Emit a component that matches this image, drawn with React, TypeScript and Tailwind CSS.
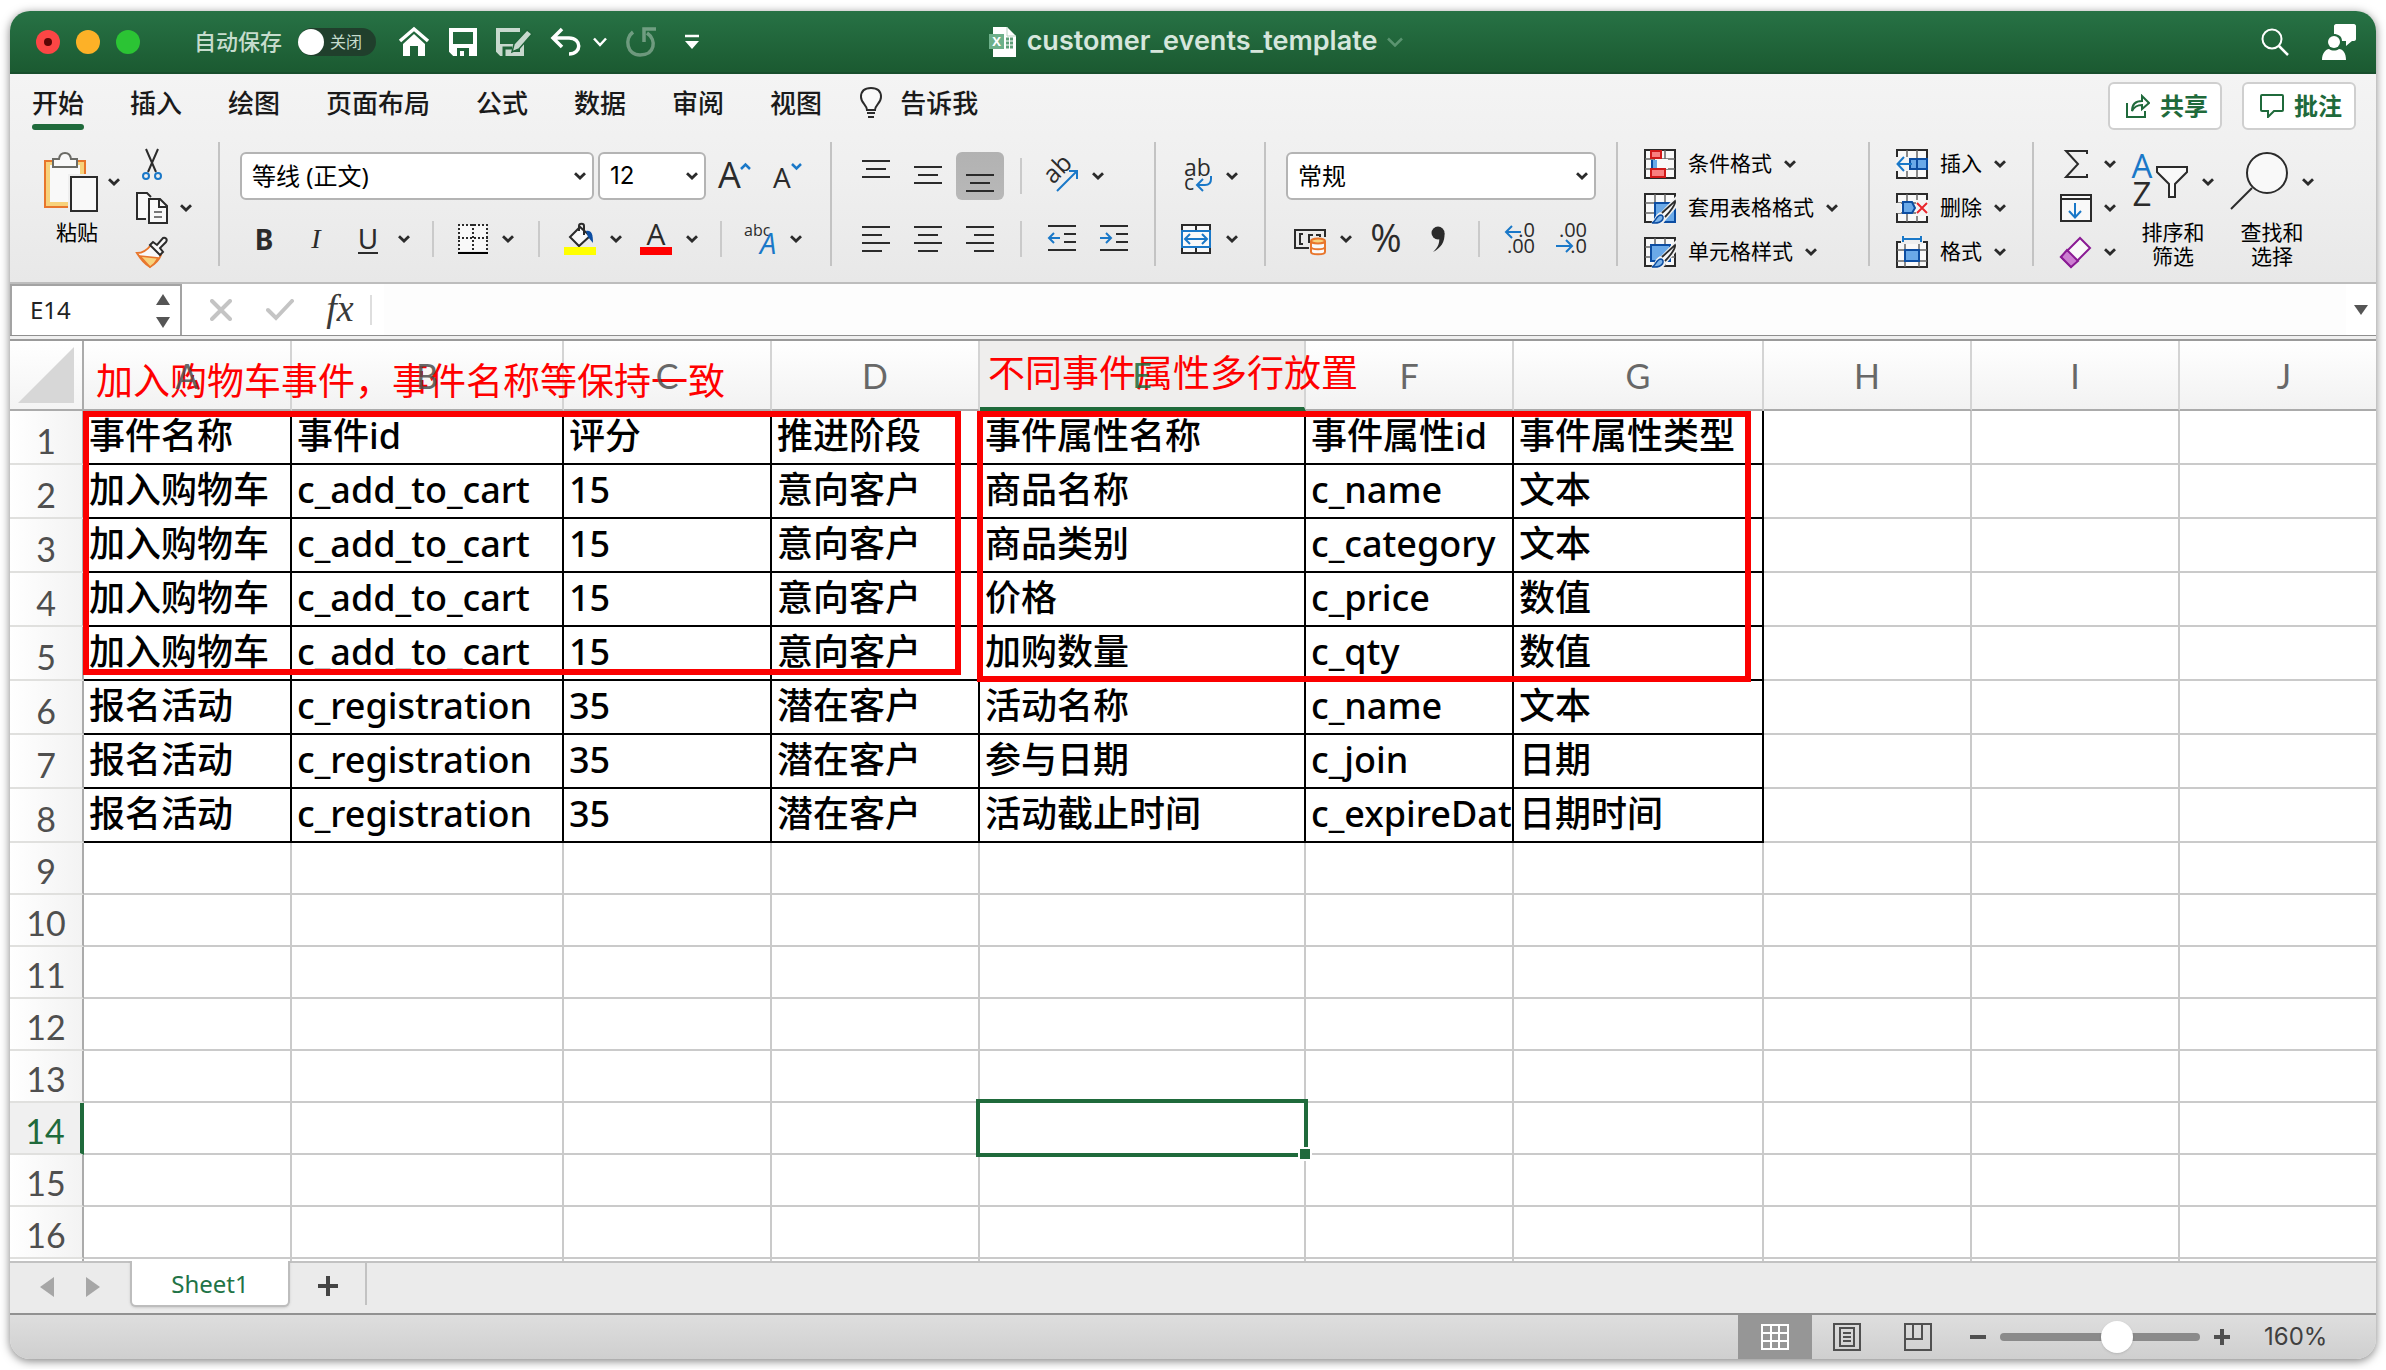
import type React from "react"

type IconProps = { children: React.ReactNode; w?: number; h?: number }

const INK = "#2b2b2b"
const BLUE = "#1a78c8"

const Icon: React.FC<IconProps> = ({ children, w = 32, h = 32 }) => (
  <svg width={w} height={h} viewBox={`0 0 ${w} ${h}`} fill="none" stroke={INK} strokeWidth="2" className="shrink-0 overflow-visible" aria-hidden="true">
    {children}
  </svg>
)

const Chevron: React.FC = () => (
  <svg width="12" height="8" viewBox="0 0 12 8" fill="none" stroke={INK} strokeWidth="2.8" className="shrink-0" aria-hidden="true">
    <path d="M1 1.2L6 6L11 1.2" />
  </svg>
)

const Divider: React.FC = () => <div className="h-[124px] w-0.5 shrink-0 bg-[#c3c3c3]" />

const glyph = { stroke: "none", fontFamily: "Open Sans, Noto Sans, sans-serif" }

/* ---------- ribbon icons ---------- */

const PasteIcon = () => (
  <Icon w={54} h={60}>
    <path d="M1 9H41V55H1Z" fill="#f7d27c" stroke="#e8762c" />
    <path d="M6 13H36V50H6Z" fill="#f9f9f9" stroke="none" />
    <path d="M9 15V7H15C16 -1 26 -1 27 7H33V15Z" fill="#f9f9f9" stroke="#6b6b66" />
    <path d="M24 22H54V60H24Z" fill="#efefef" stroke="none" />
    <path d="M27 25H53V59H27Z" fill="#f9f9f9" />
  </Icon>
)

const CutIcon = () => (
  <Icon>
    <path d="M10 1L20 24M22 1L12 24" />
    <circle cx="10" cy="28" r="3" stroke={BLUE} />
    <circle cx="22" cy="28" r="3" stroke={BLUE} />
  </Icon>
)

const CopyIcon = () => (
  <Icon>
    <path d="M10 27H1V1H11L15 5" fill="#f9f9f9" />
    <path d="M13 7H24L31 14V31H13Z" fill="#f9f9f9" />
    <path d="M23 7V15H31" />
    <path d="M18 20H26M18 25H26" stroke="#777" />
  </Icon>
)

const BrushIcon = () => (
  <Icon>
    <path d="M1 17C7 17 12 13 15 9L25 19C23 24 19 28 14 31C9 28 4 22 1 17Z" fill="#f9f9f9" stroke="#e8762c" />
    <path d="M4 20L22 22C20 26 17 29 14 31Z" fill="#f7d27c" stroke="#e8762c" strokeWidth="1.5" />
    <path d="M14 9L17 6L21 9L27 2C29 1 32 3 30 6L24 12L27 16L24 19Z" fill="#f9f9f9" />
  </Icon>
)

const BordersIcon = () => (
  <Icon>
    <path d="M3 2H31V28H3Z" fill="#f9f9f9" stroke="none" />
    <path d="M2 2H32M2 15H32" strokeDasharray="2 2" />
    <path d="M3 1V28M17 1V28M31 1V28" strokeDasharray="2 2" />
    <path d="M2 30H32" stroke="#000" />
  </Icon>
)

const FillIcon = () => (
  <Icon>
    <path d="M6 14L16 4L26 13L15 23Z" fill="#f9f9f9" />
    <path d="M15 8V3C15 0 20 0 20 3V12" />
    <path d="M22 8C27 7 29 10 29 20L24 14Z" fill="#0c4da2" stroke="none" />
    <path d="M0 24H32V32H0Z" fill="#ff0" stroke="none" />
  </Icon>
)

const FontColorIcon = () => (
  <Icon>
    <text x="16" y="22" fontSize="30" textAnchor="middle" fill={INK} style={glyph}>A</text>
    <path d="M0 24H32V32H0Z" fill="#f00" stroke="none" />
  </Icon>
)

const PhoneticIcon = () => (
  <Icon w={34}>
    <text x="1" y="13" fontSize="16" fill={INK} style={glyph}>abc</text>
    <text x="17" y="31" fontSize="29" fontStyle="italic" fill={BLUE} style={glyph}>A</text>
  </Icon>
)

const GrowIcon = () => (
  <Icon w={36}>
    <text x="2" y="28" fontSize="36" fill={INK} style={glyph}>A</text>
    <path d="M25 9L29.500 4.500L34 9" stroke={BLUE} strokeWidth="2.500" />
  </Icon>
)

const ShrinkIcon = () => (
  <Icon w={36}>
    <text x="5" y="28" fontSize="28" fill={INK} style={glyph}>A</text>
    <path d="M24 4L28.500 8.500L33 4" stroke={BLUE} strokeWidth="2.500" />
  </Icon>
)

const LinesIcon: React.FC<{ lines: number[][] }> = ({ lines }) => (
  <Icon w={28}>
    {lines.map(([x, y, w]) => (
      <path key={y} d={`M${x} ${y}H${x + w}`} />
    ))}
  </Icon>
)

const OrientIcon = () => (
  <Icon>
    <text x="7" y="25" fontSize="25" fill={INK} transform="rotate(-45 7 25)" style={glyph}>ab</text>
    <path d="M11 31L31 11M23 11H31V19" stroke={BLUE} />
  </Icon>
)

const IndentIcon: React.FC<{ out?: boolean }> = ({ out }) => (
  <Icon w={28}>
    <path d="M0 3H28M16 11H28M16 19H28M0 27H28" />
    <path d={out ? "M12 15H2M6 10L1 15L6 20" : "M0 15H10M6 10L11 15L6 20"} stroke={BLUE} />
  </Icon>
)

const WrapIcon = () => (
  <Icon>
    <text x="4" y="16" fontSize="23" fill={INK} style={glyph}>ab</text>
    <text x="4" y="30" fontSize="21" fill={INK} style={glyph}>c</text>
    <path d="M31 16V19C31 24 28 25 25 25H17M23 19L17 25L23 31" stroke={BLUE} />
  </Icon>
)

const MergeIcon = () => (
  <Icon w={30} h={30}>
    <path d="M1 1H29V29H1Z" fill="#f9f9f9" />
    <path d="M15 1V7M15 24V29" />
    <path d="M1 7H29V23H1Z" fill="#f9f9f9" stroke={BLUE} />
    <path d="M5 15H25M9 10L4 15L9 20M21 10L26 15L21 20" stroke={BLUE} />
  </Icon>
)

const CurrencyIcon = () => (
  <Icon>
    <path d="M15 25H1V7H31V14" />
    <path d="M9 11H6V21H9M15 20V12H19M26 14V12H22" />
    <path d="M17 18V29C17 32 31 32 31 29V18" fill="#f9f9f9" stroke="#e8762c" />
    <ellipse cx="24" cy="18" rx="7" ry="2.500" fill="#f7d27c" stroke="#e8762c" />
    <path d="M17 24C18 27 30 27 31 24" stroke="#e8762c" />
  </Icon>
)

const PercentIcon = () => (
  <Icon w={34}>
    <text x="17" y="29" fontSize="38" textAnchor="middle" fill={INK} style={glyph}>%</text>
  </Icon>
)

const CommaIcon = () => (
  <Icon w={16}>
    <circle cx="8" cy="10" r="6.500" fill={INK} stroke="none" />
    <path d="M14.500 10C15 19 11 25 3 29C8 24 10 20 9 14Z" fill={INK} stroke="none" />
  </Icon>
)

const DecimalIcon: React.FC<{ more?: boolean }> = ({ more }) => (
  <Icon>
    <text x="31" y="14" fontSize="20" textAnchor="end" fill={INK} style={glyph}>{more ? ".0" : ".00"}</text>
    <text x="31" y="30" fontSize="20" textAnchor="end" fill={INK} style={glyph}>{more ? ".00" : ".0"}</text>
    <path d={more ? "M17 9H2M8 3L2 9L8 15" : "M0 23H16M10 17L16 23L10 29"} stroke={BLUE} />
  </Icon>
)

const GridBase = () => (
  <>
    <path d="M1 2H31V30H1Z" fill="#f9f9f9" />
    <path d="M1 11H31M1 21H31M11 2V30M21 2V30" stroke="#666" strokeWidth="1.500" />
  </>
)

const BrushOverlay = () => (
  <>
    <path d="M8 31C13 31 12 22 18 22L31 8V14L20 27C18 31 13 33 8 31Z" fill="#f0f0f0" stroke="#f0f0f0" strokeWidth="4" />
    <path d="M18 21L31 9C32 12 26 20 21 25" fill="#f9f9f9" strokeWidth="1.800" />
    <path d="M8 31C12 30 12 23 17 23C21 24 20 32 8 31Z" fill="#7db4ea" stroke="#0c4da2" strokeWidth="1.500" />
  </>
)

const ConditionalIcon = () => (
  <Icon>
    <GridBase />
    <path d="M11 11H24V21H11Z" fill="#f9f9f9" stroke="none" />
    <path d="M7 12H13V20H7Z" fill="#6aa9e8" stroke="none" />
    <path d="M8 12V20" stroke="#0c4da2" />
    <path d="M7 3H17V10H7ZM7 21H21V29H7Z" fill="#f98080" stroke="#d11a1a" />
  </Icon>
)

const TableFormatIcon = () => (
  <Icon>
    <GridBase />
    <path d="M11 11H31V30H11Z" fill="#6aa9e8" stroke="#0c4da2" />
    <BrushOverlay />
  </Icon>
)

const CellStyleIcon = () => (
  <Icon>
    <GridBase />
    <path d="M7 9H26V25H7Z" fill="#6aa9e8" stroke="#0c4da2" />
    <BrushOverlay />
  </Icon>
)

const InsertIcon = () => (
  <Icon>
    <GridBase />
    <path d="M14 11H31V21H14Z" fill="#6aa9e8" stroke="#0c4da2" />
    <path d="M21 11V21" stroke="#0c4da2" />
    <path d="M0 9H13V23H0Z" fill="#f4f4f4" stroke="none" />
    <path d="M16 16H2M8 9L1.500 16L8 23" stroke={BLUE} />
  </Icon>
)

const DeleteIcon = () => (
  <Icon>
    <GridBase />
    <path d="M0 11H5V21H0Z" fill="#efefef" stroke="none" />
    <path d="M7 10H16L19 16L16 21H7Z" fill="#6aa9e8" stroke="#0c4da2" />
    <path d="M20 8H32V24H20Z" fill="#f4f4f4" stroke="none" />
    <path d="M21 11L31 21M31 11L21 21" stroke="#e8262c" />
  </Icon>
)

const FormatIcon = () => (
  <Icon>
    <path d="M1 6H31V31H1Z" fill="#f9f9f9" />
    <path d="M1 14H31M1 25H31M9 6V31M23 6V31" stroke="#666" strokeWidth="1.500" />
    <path d="M5 0H27V8H5Z" fill="#efefef" stroke="none" />
    <path d="M7 3H25M7 0V6M25 0V6" stroke={BLUE} />
    <path d="M9 14H23V25H9Z" fill="#6aa9e8" stroke="#0c4da2" />
  </Icon>
)

const SumIcon = () => (
  <Icon>
    <path d="M27 6V3H6L18 16L6 29H27V26" />
  </Icon>
)

const FillDownIcon = () => (
  <Icon>
    <path d="M1 3H31V29H1Z" fill="#f9f9f9" />
    <path d="M1 7H31" />
    <path d="M15 11V25M9 19L15 25.500L21 19" stroke={BLUE} />
  </Icon>
)

const EraserIcon = () => (
  <Icon>
    <path d="M1 21L20 2L30 12L11 31Z" fill="#f9f9f9" stroke="#8a1b94" />
    <path d="M1 21L7 14L18 25L11 31Z" fill="#cc7fd1" stroke="#8a1b94" />
  </Icon>
)

const SortIcon = () => (
  <Icon w={56} h={60}>
    <text x="10" y="26" fontSize="33" textAnchor="middle" fill={BLUE} style={glyph}>A</text>
    <text x="10" y="54" fontSize="33" textAnchor="middle" fill={INK} style={glyph}>Z</text>
    <path d="M25 15H55V20L43 32V45H37V32L25 20Z" fill="#f9f9f9" />
  </Icon>
)

const FindIcon = () => (
  <Icon w={58} h={60}>
    <circle cx="37" cy="21" r="20" fill="#f9f9f9" />
    <path d="M22 36L1 57" />
  </Icon>
)

/* ---------- small controls ---------- */

const IconButton: React.FC<{ label: string; active?: boolean; children: React.ReactNode }> = ({ label, active, children }) => (
  <button
    aria-label={label}
    className={
      active
        ? "flex h-12 w-12 shrink-0 items-center justify-center rounded-md bg-gradient-to-b from-[#b2b2b2] to-[#b8b8b8]"
        : "flex h-12 w-12 shrink-0 items-center justify-center"
    }
  >
    {children}
  </button>
)

const SplitButton: React.FC<{ label: string; children: React.ReactNode }> = ({ label, children }) => (
  <button aria-label={label} className="flex shrink-0 items-center gap-3.5">
    <span className="flex w-8 justify-center">{children}</span>
    <Chevron />
  </button>
)

const MenuRow: React.FC<{ label: string; text?: string; arrow?: boolean; children: React.ReactNode }> = ({ label, text, arrow = true, children }) => (
  <button aria-label={label} className="flex h-11 items-center gap-3 text-[21px] text-black">
    {children}
    {text && <span>{text}</span>}
    {arrow && <Chevron />}
  </button>
)

const Select: React.FC<{ label: string; value: string; className: string }> = ({ label, value, className }) => (
  <div className="relative flex items-center">
    <select
      aria-label={label}
      defaultValue={value}
      className={`h-12 appearance-none rounded-md border-2 border-[#b4b4b4] bg-white px-2.5 text-2xl text-black ${className}`}
    >
      <option>{value}</option>
    </select>
    <span className="pointer-events-none absolute right-2">
      <Chevron />
    </span>
  </div>
)

/* ---------- window parts ---------- */

const TitleBar: React.FC = () => (
  <header className="flex h-[63px] items-center justify-between rounded-t-[20px] border-b-2 border-[#184f2d] bg-gradient-to-b from-[#277245] to-[#1b5a31]">
    <div className="flex flex-1 items-center pl-[26px]">
      <div className="flex gap-4">
        <button aria-label="关闭窗口" className="flex h-6 w-6 items-center justify-center rounded-full bg-[#fc4645]">
          <span className="h-2 w-2 rounded-full bg-[#5c0505]" />
        </button>
        <button aria-label="最小化" className="h-6 w-6 rounded-full bg-[#fdb127]" />
        <button aria-label="全屏" className="h-6 w-6 rounded-full bg-[#2bc434]" />
      </div>
      <span className="ml-[54px] text-[22px] font-medium text-[#c6dccd]">自动保存</span>
      <button role="switch" aria-checked="false" aria-label="自动保存" className="ml-4 flex h-7 w-[78px] items-center rounded-full bg-[#203f2c]">
        <span className="h-[26px] w-[26px] rounded-full bg-white" />
        <span className="ml-1.5 text-base text-[#c6dccd]">关闭</span>
      </button>
      <div className="ml-[22px] flex items-center gap-[19px]">
        <button aria-label="主页">
          <Icon>
            <path d="M2 15L16 3L30 15" stroke="#fff" strokeWidth="3.500" />
            <path d="M5 18L16 8L27 18V30H20V20H12V30H5Z" fill="#fff" stroke="none" />
          </Icon>
        </button>
        <button aria-label="保存">
          <Icon w={28} h={28}>
            <path d="M2 2H26V26H5L2 23Z" stroke="#fff" strokeWidth="4" />
            <path d="M2 16H26V26H2Z" fill="#fff" stroke="none" />
            <path d="M8 20H20V28H15V23H11V28H8Z" fill="#1f6439" stroke="none" />
          </Icon>
        </button>
        <button aria-label="另存为" className="opacity-75">
          <Icon w={36} h={28}>
            <path d="M24 2H2V23L5 26H26V16" stroke="#fff" strokeWidth="4" />
            <path d="M2 16H20L16 26H2Z" fill="#fff" stroke="none" />
            <path d="M8 28V20H16" stroke="#1f6439" strokeWidth="3" />
            <path d="M16 24L18 16L31 2L36 6L23 21Z" fill="#fff" stroke="#1f6439" strokeWidth="1.500" />
          </Icon>
        </button>
        <div className="flex items-center gap-3">
          <button aria-label="撤消">
            <Icon w={30} h={28}>
              <path d="M11 1L2 10L11 19M2 10H18C31 10 31 26 18 26" stroke="#fff" strokeWidth="3.500" />
            </Icon>
          </button>
          <button aria-label="撤消列表">
            <svg width="14" height="10" viewBox="0 0 14 10" fill="none" stroke="#fff" strokeWidth="2.500">
              <path d="M1 1.500L7 8L13 1.500" />
            </svg>
          </button>
        </div>
        <button aria-label="恢复" className="opacity-35">
          <Icon w={30} h={30}>
            <path d="M7 5C-2 12 1 28 14 28C29 28 31 13 21 6M18 15V2H30" stroke="#fff" strokeWidth="3.500" />
          </Icon>
        </button>
        <button aria-label="自定义工具栏" className="ml-2.5">
          <Icon w={14} h={16}>
            <path d="M0 2H14" stroke="#fff" strokeWidth="2.500" />
            <path d="M0 7H14L7 15Z" fill="#fff" stroke="none" />
          </Icon>
        </button>
      </div>
    </div>
    <h1 className="flex items-center gap-2.5 font-['Inter'] text-[27px] font-semibold text-[#d6e6dc]">
      <Icon w={28} h={30}>
        <path d="M4 0H18L27 9V30H4Z" fill="#fff" stroke="none" />
        <path d="M18 0V9H27" stroke="#b9d3c2" strokeWidth="1" />
        <path d="M17 12H25M17 16H25M17 20H25" stroke="#5e9f78" strokeWidth="3" strokeDasharray="3 1" />
        <path d="M0 7H15V22H0Z" fill="#6db08a" stroke="none" />
        <text x="7.500" y="19" fontSize="13" fontWeight="bold" textAnchor="middle" fill="#fff" style={glyph}>X</text>
      </Icon>
      customer_events_template
      <svg width="16" height="10" viewBox="0 0 16 10" fill="none" stroke="#5a9470" strokeWidth="2.500">
        <path d="M1 1.500L8 8.500L15 1.500" />
      </svg>
    </h1>
    <div className="flex flex-1 items-center justify-end gap-8 pr-5">
      <button aria-label="搜索">
        <Icon w={30} h={30}>
          <circle cx="12" cy="12" r="9.500" stroke="#fff" />
          <path d="M19 19L28 28" stroke="#fff" strokeWidth="2.500" />
        </Icon>
      </button>
      <button aria-label="帐户">
        <Icon w={34} h={36}>
          <path d="M12 2C12 1 13 0 14 0H32C33 0 34 1 34 2V15C34 16 33 17 32 17H30L24 22V17H20C20 12 16 10 12 10Z" fill="#fff" stroke="none" />
          <circle cx="12" cy="18" r="6" fill="#fff" stroke="none" />
          <path d="M0 36C0 29 4 25 7 25C10 27 14 27 17 25C21 25 24 29 24 36Z" fill="#fff" stroke="none" />
        </Icon>
      </button>
    </div>
  </header>
)

const tabs = ["开始", "插入", "绘图", "页面布局", "公式", "数据", "审阅", "视图"]

const RibbonTabs: React.FC = () => (
  <nav className="flex h-14 items-end justify-between pl-[22px] pr-5">
    <div className="flex gap-[46px] text-[26px] leading-8 font-medium text-[#1a1a1a]">
      {tabs.map((tab, i) => (
        <button key={tab} className="flex flex-col gap-[5px] whitespace-nowrap">
          {tab}
          <span className={i === 0 ? "h-1.5 w-full rounded-full bg-[#1f6a3b]" : "h-1.5 w-full"} />
        </button>
      ))}
      <button className="-ml-2 flex items-start gap-[18px] whitespace-nowrap">
        <Icon w={22}>
          <path d="M7 23C7 18 1 16 1 10C1 4 5 1 11 1C17 1 21 4 21 10C21 16 15 18 15 23Z" fill="#f9f9f9" />
          <path d="M7 26H15M8 30H14" />
        </Icon>
        告诉我
      </button>
    </div>
    <div className="flex gap-5 text-2xl font-bold text-[#1f6a3b]">
      <button className="flex h-12 w-[114px] items-center justify-center gap-2.5 rounded-md border-2 border-[#cfcfcf] bg-white pl-1">
        <svg width="24" height="24" viewBox="0 0 24 24" fill="none" stroke="#1f6a3b" strokeWidth="2">
          <path d="M1 9V23H19V17" />
          <path d="M6 17C6 10 10 7 16 7V2L23 9L16 15V11C11 11 8 13 6 17Z" />
        </svg>
        共享
      </button>
      <button className="flex h-12 w-[114px] items-center justify-center gap-2.5 rounded-md border-2 border-[#cfcfcf] bg-white pl-1">
        <svg width="24" height="24" viewBox="0 0 24 24" fill="none" stroke="#1f6a3b" strokeWidth="2">
          <path d="M2 1H22C23 1 23 1 23 2V16C23 17 23 17 22 17H14L8 23V17H2C1 17 1 17 1 16V2C1 1 1 1 2 1Z" />
        </svg>
        批注
      </button>
    </div>
  </nav>
)

const ShortDivider: React.FC<{ className: string }> = ({ className }) => (
  <span className={`h-9 w-0.5 shrink-0 bg-[#cacaca] ${className}`} />
)

const Ribbon: React.FC = () => (
  <section className="flex items-start overflow-hidden pt-3 pb-2">
    <div className="flex gap-4 pr-[26px] pl-[34px]">
      <button aria-label="粘贴" className="flex flex-col items-start gap-2 pt-2.5 text-[21px] leading-6 text-black">
        <span className="flex items-center gap-2.5">
          <PasteIcon />
          <Chevron />
        </span>
        <span className="ml-3">粘贴</span>
      </button>
      <div>
        <MenuRow label="剪切" arrow={false}><CutIcon /></MenuRow>
        <MenuRow label="复制"><CopyIcon /></MenuRow>
        <MenuRow label="格式刷" arrow={false}><BrushIcon /></MenuRow>
      </div>
    </div>
    <Divider />

    <div className="flex flex-col gap-[15px] px-5 pt-2.5">
      <div className="flex gap-1">
        <Select label="字体" value="等线 (正文)" className="w-[354px]" />
        <Select label="字号" value="12" className="w-[108px] font-['Inter']" />
        <IconButton label="增大字号"><GrowIcon /></IconButton>
        <IconButton label="减小字号"><ShrinkIcon /></IconButton>
      </div>
      <div className="flex h-12 items-center text-[28px] text-[#2b2b2b]">
        <div className="flex items-center gap-1">
          <button aria-label="加粗" className="h-12 w-12 leading-[46px] font-bold">B</button>
          <button aria-label="倾斜" className="h-12 w-12 font-['Liberation_Serif'] leading-[46px] italic">I</button>
          <button aria-label="下划线" className="flex h-12 w-12 items-center justify-center">
            <span className="border-b-2 border-[#2b2b2b] leading-7">U</span>
          </button>
        </div>
        <button aria-label="下划线样式" className="ml-1.5"><Chevron /></button>
        <ShortDivider className="mx-[22px]" />
        <SplitButton label="边框"><BordersIcon /></SplitButton>
        <ShortDivider className="mx-6" />
        <div className="flex gap-[18px]">
          <SplitButton label="填充颜色"><FillIcon /></SplitButton>
          <SplitButton label="字体颜色"><FontColorIcon /></SplitButton>
        </div>
        <ShortDivider className="mx-[22px]" />
        <SplitButton label="拼音"><PhoneticIcon /></SplitButton>
      </div>
    </div>
    <Divider />

    <div className="flex flex-col gap-[15px] pt-2.5 pr-4 pl-5">
      <div className="flex items-center gap-1">
        <IconButton label="顶端对齐"><LinesIcon lines={[[0, 1, 28], [4, 9, 20], [0, 17, 28]]} /></IconButton>
        <IconButton label="垂直居中"><LinesIcon lines={[[0, 7, 28], [4, 15, 20], [0, 23, 28]]} /></IconButton>
        <IconButton label="底端对齐" active><LinesIcon lines={[[0, 15, 28], [4, 23, 20], [0, 31, 28]]} /></IconButton>
        <ShortDivider className="mx-3" />
        <span className="pl-2"><SplitButton label="方向"><OrientIcon /></SplitButton></span>
      </div>
      <div className="flex items-center gap-1">
        <IconButton label="左对齐"><LinesIcon lines={[[0, 4, 28], [0, 12, 20], [0, 20, 28], [0, 28, 20]]} /></IconButton>
        <IconButton label="居中"><LinesIcon lines={[[0, 4, 28], [4, 12, 20], [0, 20, 28], [4, 28, 20]]} /></IconButton>
        <IconButton label="右对齐"><LinesIcon lines={[[0, 4, 28], [8, 12, 20], [0, 20, 28], [8, 28, 20]]} /></IconButton>
        <ShortDivider className="mx-3" />
        <IconButton label="减少缩进量"><IndentIcon out /></IconButton>
        <IconButton label="增加缩进量"><IndentIcon /></IconButton>
      </div>
    </div>
    <Divider />

    <div className="flex flex-col gap-[15px] pt-2.5 pr-[26px] pl-6">
      <div className="flex h-12 items-center"><SplitButton label="自动换行"><WrapIcon /></SplitButton></div>
      <div className="flex h-12 items-center"><SplitButton label="合并后居中"><MergeIcon /></SplitButton></div>
    </div>
    <Divider />

    <div className="flex flex-col gap-[15px] px-5 pt-2.5">
      <Select label="数字格式" value="常规" className="w-[310px]" />
      <div className="flex items-center gap-1 pl-2">
        <span className="pr-1.5"><SplitButton label="货币"><CurrencyIcon /></SplitButton></span>
        <IconButton label="百分比"><PercentIcon /></IconButton>
        <IconButton label="千位分隔"><CommaIcon /></IconButton>
        <ShortDivider className="mx-3" />
        <IconButton label="增加小数位数"><DecimalIcon more /></IconButton>
        <IconButton label="减少小数位数"><DecimalIcon /></IconButton>
      </div>
    </div>
    <Divider />

    <div className="pr-[30px] pl-[26px]">
      <MenuRow label="条件格式" text="条件格式"><ConditionalIcon /></MenuRow>
      <MenuRow label="套用表格格式" text="套用表格格式"><TableFormatIcon /></MenuRow>
      <MenuRow label="单元格样式" text="单元格样式"><CellStyleIcon /></MenuRow>
    </div>
    <Divider />

    <div className="px-[26px]">
      <MenuRow label="插入" text="插入"><InsertIcon /></MenuRow>
      <MenuRow label="删除" text="删除"><DeleteIcon /></MenuRow>
      <MenuRow label="格式" text="格式"><FormatIcon /></MenuRow>
    </div>
    <Divider />

    <div className="flex gap-4 pl-[26px]">
      <div>
        <MenuRow label="自动求和"><SumIcon /></MenuRow>
        <MenuRow label="填充"><FillDownIcon /></MenuRow>
        <MenuRow label="清除"><EraserIcon /></MenuRow>
      </div>
      <button className="flex flex-col items-center gap-2 pt-2.5 text-[21px] leading-6 text-black">
        <span className="flex items-center gap-3.5"><SortIcon /><Chevron /></span>
        <span>排序和<br />筛选</span>
      </button>
      <button className="flex flex-col items-center gap-2 pt-2.5 text-[21px] leading-6 text-black">
        <span className="flex items-center gap-3.5"><FindIcon /><Chevron /></span>
        <span>查找和<br />选择</span>
      </button>
    </div>
  </section>
)

const FormulaBar: React.FC = () => (
  <div className="flex h-[52px] border-b border-[#8f8f8f] bg-white">
    <div className="flex w-[172px] items-center justify-between border-2 border-b-0 border-[#a3a3a3] pr-2.5 pl-[18px]">
      <input aria-label="名称框" defaultValue="E14" className="w-24 pb-0.5 text-2xl text-[#222]" />
      <div className="flex flex-col gap-3">
        <button aria-label="上一个">
          <svg width="14" height="11" viewBox="0 0 14 11" className="block" fill="#555"><path d="M0 11L7 0L14 11Z" /></svg>
        </button>
        <button aria-label="下一个">
          <svg width="14" height="11" viewBox="0 0 14 11" className="block" fill="#555"><path d="M0 0L7 11L14 0Z" /></svg>
        </button>
      </div>
    </div>
    <div className="flex items-center pl-7">
      <button aria-label="取消">
        <svg width="22" height="22" viewBox="0 0 22 22" fill="none" stroke="#c4c4c4" strokeWidth="4" strokeLinecap="round"><path d="M2 2L20 20M20 2L2 20" /></svg>
      </button>
      <button aria-label="输入" className="ml-[34px]">
        <svg width="28" height="22" viewBox="0 0 28 22" fill="none" stroke="#c4c4c4" strokeWidth="4" strokeLinecap="round"><path d="M2 11L10 19L26 2" /></svg>
      </button>
      <button aria-label="插入函数" className="ml-[30px] w-8 pb-1 font-['Liberation_Serif'] text-[38px] leading-9 text-[#3a3a3a] italic">fx</button>
      <span className="ml-3.5 h-[30px] w-0.5 bg-[#dedede]" />
    </div>
    <input aria-label="编辑栏" className="ml-3 min-w-0 flex-1 bg-[#fdfdfd]" />
    <button aria-label="展开编辑栏" className="px-2">
      <svg width="14" height="10" viewBox="0 0 14 10" fill="#555"><path d="M0 0L7 10L14 0Z" /></svg>
    </button>
  </div>
)

const columns = [
  { name: "A", width: "w-[208px]" },
  { name: "B", width: "w-[272px]" },
  { name: "C", width: "w-[208px]" },
  { name: "D", width: "w-[208px]" },
  { name: "E", width: "w-[326px]" },
  { name: "F", width: "w-[208px]" },
  { name: "G", width: "w-[250px]" },
  { name: "H", width: "w-[208px]" },
  { name: "I", width: "w-[208px]" },
  { name: "J", width: "" },
]

const data = [
  ["事件名称", "事件id", "评分", "推进阶段", "事件属性名称", "事件属性id", "事件属性类型"],
  ["加入购物车", "c_add_to_cart", "15", "意向客户", "商品名称", "c_name", "文本"],
  ["加入购物车", "c_add_to_cart", "15", "意向客户", "商品类别", "c_category", "文本"],
  ["加入购物车", "c_add_to_cart", "15", "意向客户", "价格", "c_price", "数值"],
  ["加入购物车", "c_add_to_cart", "15", "意向客户", "加购数量", "c_qty", "数值"],
  ["报名活动", "c_registration", "35", "潜在客户", "活动名称", "c_name", "文本"],
  ["报名活动", "c_registration", "35", "潜在客户", "参与日期", "c_join", "日期"],
  ["报名活动", "c_registration", "35", "潜在客户", "活动截止时间", "c_expireDat", "日期时间"],
]

const rows = Array.from({ length: 16 }, (_, i) => i + 1)

const Grid: React.FC = () => (
  <div className="relative mt-[3px] border-t-2 border-[#9a9a9a] bg-white">
    <table className="w-full table-fixed border-separate border-spacing-0">
      <colgroup>
        <col className="w-[74px]" />
        {columns.map((c) => (
          <col key={c.name} className={c.width} />
        ))}
      </colgroup>
      <thead>
        <tr className="h-[70px] font-['Lato'] text-[34px] text-[#4f4f4f]">
          <th className="border-r-2 border-b-2 border-[#ababab] bg-gradient-to-b from-white to-[#f4f4f4]">
            <svg width="56" height="56" viewBox="0 0 56 56" fill="#d7d7d7" className="mx-auto"><path d="M56 0V56H0Z" /></svg>
          </th>
          {columns.map((c) => (
            <th
              key={c.name}
              scope="col"
              className={
                c.name === "E"
                  ? "border-r-2 border-b-4 border-r-[#d4d4d4] border-b-[#1f6a3b] bg-[#efeeed] font-normal text-[#1f6a3b]"
                  : "border-r-2 border-b-2 border-r-[#d4d4d4] border-b-[#ababab] bg-gradient-to-b from-white to-[#f2f2f2] font-normal last:border-r-0 last:pl-3"
              }
            >
              <span className="relative z-10 opacity-85">{c.name}</span>
            </th>
          ))}
        </tr>
      </thead>
      <tbody>
        {rows.map((n) => (
          <tr key={n} className={n <= 8 ? "h-[54px]" : "h-[52px]"}>
            <th
              scope="row"
              className={
                n === 14
                  ? "border-r-4 border-b-2 border-r-[#1f6a3b] border-b-[#e0e0de] bg-[#f0f0f0] align-bottom font-['Lato'] text-[34px] leading-[44px] font-normal text-[#1f6a3b]"
                  : "border-r-2 border-b-2 border-r-[#ababab] border-b-[#e0e0de] bg-gradient-to-r from-white to-[#f3f3f3] align-bottom font-['Lato'] text-[34px] leading-[44px] font-normal text-[#4f4f4f]"
              }
            >
              {n}
            </th>
            {columns.map((c, i) => (
              <td
                key={c.name}
                className={
                  n <= 8 && i < 7
                    ? "border-r-2 border-b-2 border-black p-0 align-top text-black"
                    : "relative border-r-2 border-b-2 border-[#cacaca] p-0 last:border-r-0"
                }
              >
                {n <= 8 && i < 7 && (
                  <div className="overflow-hidden pl-[5px] text-4xl leading-[50px] font-medium whitespace-nowrap">
                    {data[n - 1][i]}
                  </div>
                )}
                {n === 14 && c.name === "E" && (
                  <div className="absolute -inset-1 z-10 border-4 border-[#1f6a3b]">
                    <span className="absolute -right-2 -bottom-2 h-3.5 w-3.5 border-2 border-white bg-[#1f6a3b]" />
                  </div>
                )}
              </td>
            ))}
          </tr>
        ))}
        <tr className="h-0.5">
          <td className="border-r-2 border-[#ababab] p-0" />
          {columns.map((c) => (
            <td key={c.name} className="border-r-2 border-[#cacaca] p-0 last:border-r-0" />
          ))}
        </tr>
      </tbody>
    </table>

    {/* review notes drawn over the sheet */}
    <p className="absolute top-3.5 left-[86px] text-[37px] leading-[52px] whitespace-nowrap text-[#ff0000]">
      加入购物车事件，事件名称等保持一致
    </p>
    <p className="absolute top-1.5 left-[978px] text-[37px] leading-[52px] whitespace-nowrap text-[#ff0000]">
      不同事件属性多行放置
    </p>
    <div className="absolute top-[70px] left-[73px] h-[264px] w-[878px] border-[6px] border-[#fb0000]" />
    <div className="absolute top-[70px] left-[967px] h-[271px] w-[774px] border-[6px] border-[#fb0000]" />
  </div>
)

const SheetTabs: React.FC = () => (
  <div className="flex h-[52px] items-start border-t-2 border-[#c2c2c2] bg-[#ebebeb] pl-[30px]">
    <div className="flex h-12 items-center gap-8">
      <button aria-label="上一张工作表">
        <svg width="14" height="20" viewBox="0 0 14 20" fill="#a6a6a6"><path d="M14 0V20L0 10Z" /></svg>
      </button>
      <button aria-label="下一张工作表">
        <svg width="14" height="20" viewBox="0 0 14 20" fill="#a6a6a6"><path d="M0 0V20L14 10Z" /></svg>
      </button>
    </div>
    <button className="-mt-0.5 ml-[30px] h-[46px] w-[160px] rounded-b-md border-2 border-t-0 border-[#bdbdbd] bg-white pt-0.5 text-2xl text-[#217346] shadow">
      Sheet1
    </button>
    <button aria-label="新建工作表" className="flex h-[46px] w-[75px] items-center justify-center">
      <svg width="20" height="20" viewBox="0 0 20 20" stroke="#444" strokeWidth="4"><path d="M10 0V20M0 10H20" /></svg>
    </button>
    <span className="h-[42px] w-0.5 bg-[#c2c2c2]" />
  </div>
)

const StatusBar: React.FC = () => (
  <footer className="flex h-[46px] items-center justify-end rounded-b-[20px] border-t-2 border-[#919191] bg-gradient-to-b from-[#dedede] to-[#cfcfcf] pr-[46px]">
    <button aria-label="普通视图" className="flex h-full w-[74px] items-center justify-center bg-[#969696]">
      <Icon w={28} h={28}>
        <path d="M1 2H27V26H1ZM1 10H27M1 18H27M10 2V26M18 2V26" stroke="#fff" />
      </Icon>
    </button>
    <button aria-label="页面布局视图" className="ml-[21px]">
      <Icon w={28} h={28}>
        <path d="M1 1H27V27H1ZM7 5H21V23H7ZM10 10H18M10 14H18M10 18H18" stroke="#505050" />
      </Icon>
    </button>
    <button aria-label="分页预览" className="ml-[43px]">
      <Icon w={28} h={28}>
        <path d="M1 1H27V27H1ZM1 16H18V1M9 1V16" stroke="#505050" />
      </Icon>
    </button>
    <button aria-label="缩小" className="ml-[38px]">
      <svg width="16" height="16" viewBox="0 0 16 16" stroke="#505050" strokeWidth="4"><path d="M0 8H16" /></svg>
    </button>
    <input
      type="range"
      aria-label="缩放"
      defaultValue={60}
      className="mx-3.5 h-2 w-[200px] appearance-none rounded-full bg-[#8a8a8a] [&::-webkit-slider-thumb]:h-8 [&::-webkit-slider-thumb]:w-8 [&::-webkit-slider-thumb]:appearance-none [&::-webkit-slider-thumb]:rounded-full [&::-webkit-slider-thumb]:bg-white [&::-webkit-slider-thumb]:shadow"
    />
    <button aria-label="放大">
      <svg width="16" height="16" viewBox="0 0 16 16" stroke="#505050" strokeWidth="4"><path d="M8 0V16M0 8H16" /></svg>
    </button>
    <span className="ml-[34px] w-[66px] font-['Inter'] text-2xl text-[#404040]">160%</span>
  </footer>
)

const App: React.FC = () => (
  <main className="bg-white p-2.5 pt-[11px] font-['Noto_Sans','Noto_Sans_CJK_SC',sans-serif]">
    <div className="rounded-[20px] bg-[#f0f0f0] shadow-[0_2px_10px_rgba(0,0,0,0.5)]">
      <TitleBar />
      <div className="border-b-2 border-[#bdbdbd] bg-gradient-to-b from-[#f4f4f4] via-[#efefef] to-[#e8e8e8]">
        <RibbonTabs />
        <Ribbon />
      </div>
      <FormulaBar />
      <Grid />
      <SheetTabs />
      <StatusBar />
    </div>
  </main>
)

export default App
